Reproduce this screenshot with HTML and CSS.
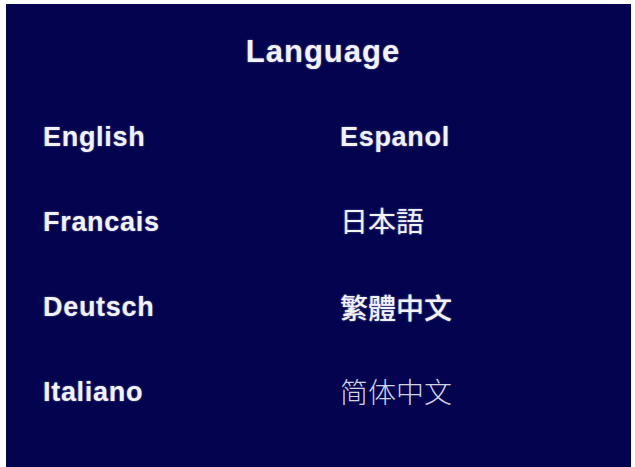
FILE: index.html
```html
<!DOCTYPE html>
<html lang="en">
<head>
<meta charset="utf-8">
<title>Language</title>
<link rel="stylesheet" href="styles.css">
</head>
<body>
<div class="panel">
  <h1 class="title">Language</h1>
  <div class="grid">
    <div class="item latin">English</div>
    <div class="item latin">Espanol</div>
    <div class="item latin">Francais</div>
    <div class="item cjk jp" lang="ja">日本語</div>
    <div class="item latin">Deutsch</div>
    <div class="item cjk tc" lang="zh-Hant">繁體中文</div>
    <div class="item latin">Italiano</div>
    <div class="item cjk sc" lang="zh-Hans">简体中文</div>
  </div>
</div>
</body>
</html>
```
FILE: styles.css
```css
html, body {
  margin: 0;
  padding: 0;
  background: #ffffff;
  width: 635px;
  height: 467px;
  overflow: hidden;
}

.panel {
  margin: 4px 0 0 6px;
  width: 625px;
  height: 463px;
  background: #03034f;
  padding-top: 28px;
  box-sizing: border-box;
  color: #f2f2fa;
  font-family: "Liberation Sans", Arial, sans-serif;
}

.title {
  margin: 0;
  padding-left: 9px;
  text-align: center;
  font-size: 31px;
  line-height: 40px;
  font-weight: bold;
  letter-spacing: 1px;
  text-shadow: 0 0 2px rgba(190, 190, 255, 0.6);
}

.grid {
  margin-top: 23px;
  padding-left: 37px;
  display: grid;
  grid-template-columns: 297px 1fr;
  grid-auto-rows: 85px;
}

.item {
  line-height: 85px;
  white-space: nowrap;
  text-shadow: 0 0 2px rgba(190, 190, 255, 0.6);
}

.latin {
  font-size: 27px;
  font-weight: bold;
  letter-spacing: 0.7px;
}

.cjk {
  font-size: 28px;
  font-family: "Noto Sans CJK JP", "Noto Sans CJK SC", sans-serif;
}

.jp {
  font-family: "Noto Sans CJK JP", sans-serif;
  font-weight: 400;
  position: relative;
  top: -2px;
}

.tc {
  font-family: "Noto Sans CJK TC", sans-serif;
  font-weight: 500;
}

.sc {
  font-family: "Noto Sans CJK SC", sans-serif;
  font-weight: 300;
  color: #d2d2e2;
  text-shadow: none;
  position: relative;
  top: -1px;
}
```
